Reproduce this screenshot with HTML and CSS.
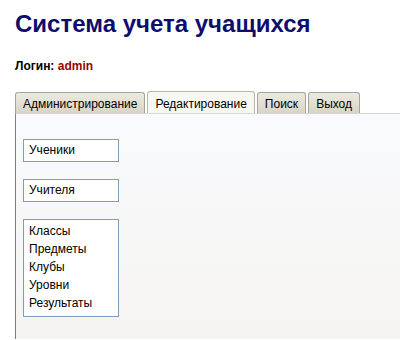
FILE: index.html
```html
<!DOCTYPE html>
<html lang="ru">
<head>
<meta charset="utf-8">
<link rel="stylesheet" href="styles.css">
</head>
<body>
<div class="page">
  <h1 class="title">Система учета учащихся</h1>
  <div class="login">Логин: <span class="user">admin</span></div>
  <div class="tabs">
    <div class="tab">Администрирование</div>
    <div class="tab active">Редактирование</div>
    <div class="tab">Поиск</div>
    <div class="tab">Выход</div>
  </div>
  <div class="panel">
    <div class="box single">Ученики</div>
    <div class="box single">Учителя</div>
    <div class="box list">
      <div class="item">Классы</div>
      <div class="item">Предметы</div>
      <div class="item">Клубы</div>
      <div class="item">Уровни</div>
      <div class="item">Результаты</div>
    </div>
  </div>
</div>
</body>
</html>
```
FILE: styles.css
```css
html, body {
  margin: 0;
  padding: 0;
  background: #ffffff;
  font-family: "Liberation Sans", Arial, sans-serif;
  overflow: hidden;
}
.page {
  padding: 0 0 0 15px;
}
.title {
  margin: 0;
  padding-top: 10px;
  font-size: 24px;
  line-height: 28px;
  font-weight: bold;
  color: #0d0d6b;
}
.login {
  margin-top: 21px;
  font-size: 12px;
  line-height: 14px;
  font-weight: bold;
  color: #000;
}
.user {
  color: #990000;
}
.tabs {
  display: flex;
  gap: 2px;
  margin-top: 18px;
  height: 22px;
  align-items: flex-end;
}
.tab {
  height: 21px;
  box-sizing: border-box;
  padding: 3px 7px 0 7px;
  font-size: 12px;
  line-height: 16px;
  color: #000;
  border: 1px solid #a5a39a;
  border-bottom: none;
  border-radius: 3px 3px 0 0;
  background: linear-gradient(#eceae0, #d8d5c6);
}
.tab.active {
  height: 22px;
  padding-top: 4px;
  background: #f8f7f2;
  border-color: #b8b6ad;
}
.panel {
  box-sizing: border-box;
  border-top: 1px solid #d6d6d6;
  border-left: 1px solid #808080;
  height: 226px;
  padding: 25px 0 0 7px;
  background: linear-gradient(#f9fafd, #f5f4f1);
  display: flex;
  flex-direction: column;
  gap: 17px;
  align-items: flex-start;
}
.box {
  width: 96px;
  box-sizing: border-box;
  border: 1px solid #7f9db9;
  background: #fff;
  font-size: 12px;
  color: #000;
}
.single {
  height: 23px;
  line-height: 21px;
  padding-left: 5px;
}
.list {
  padding: 2px 0 4px 5px;
}
.item {
  line-height: 18px;
}
```
